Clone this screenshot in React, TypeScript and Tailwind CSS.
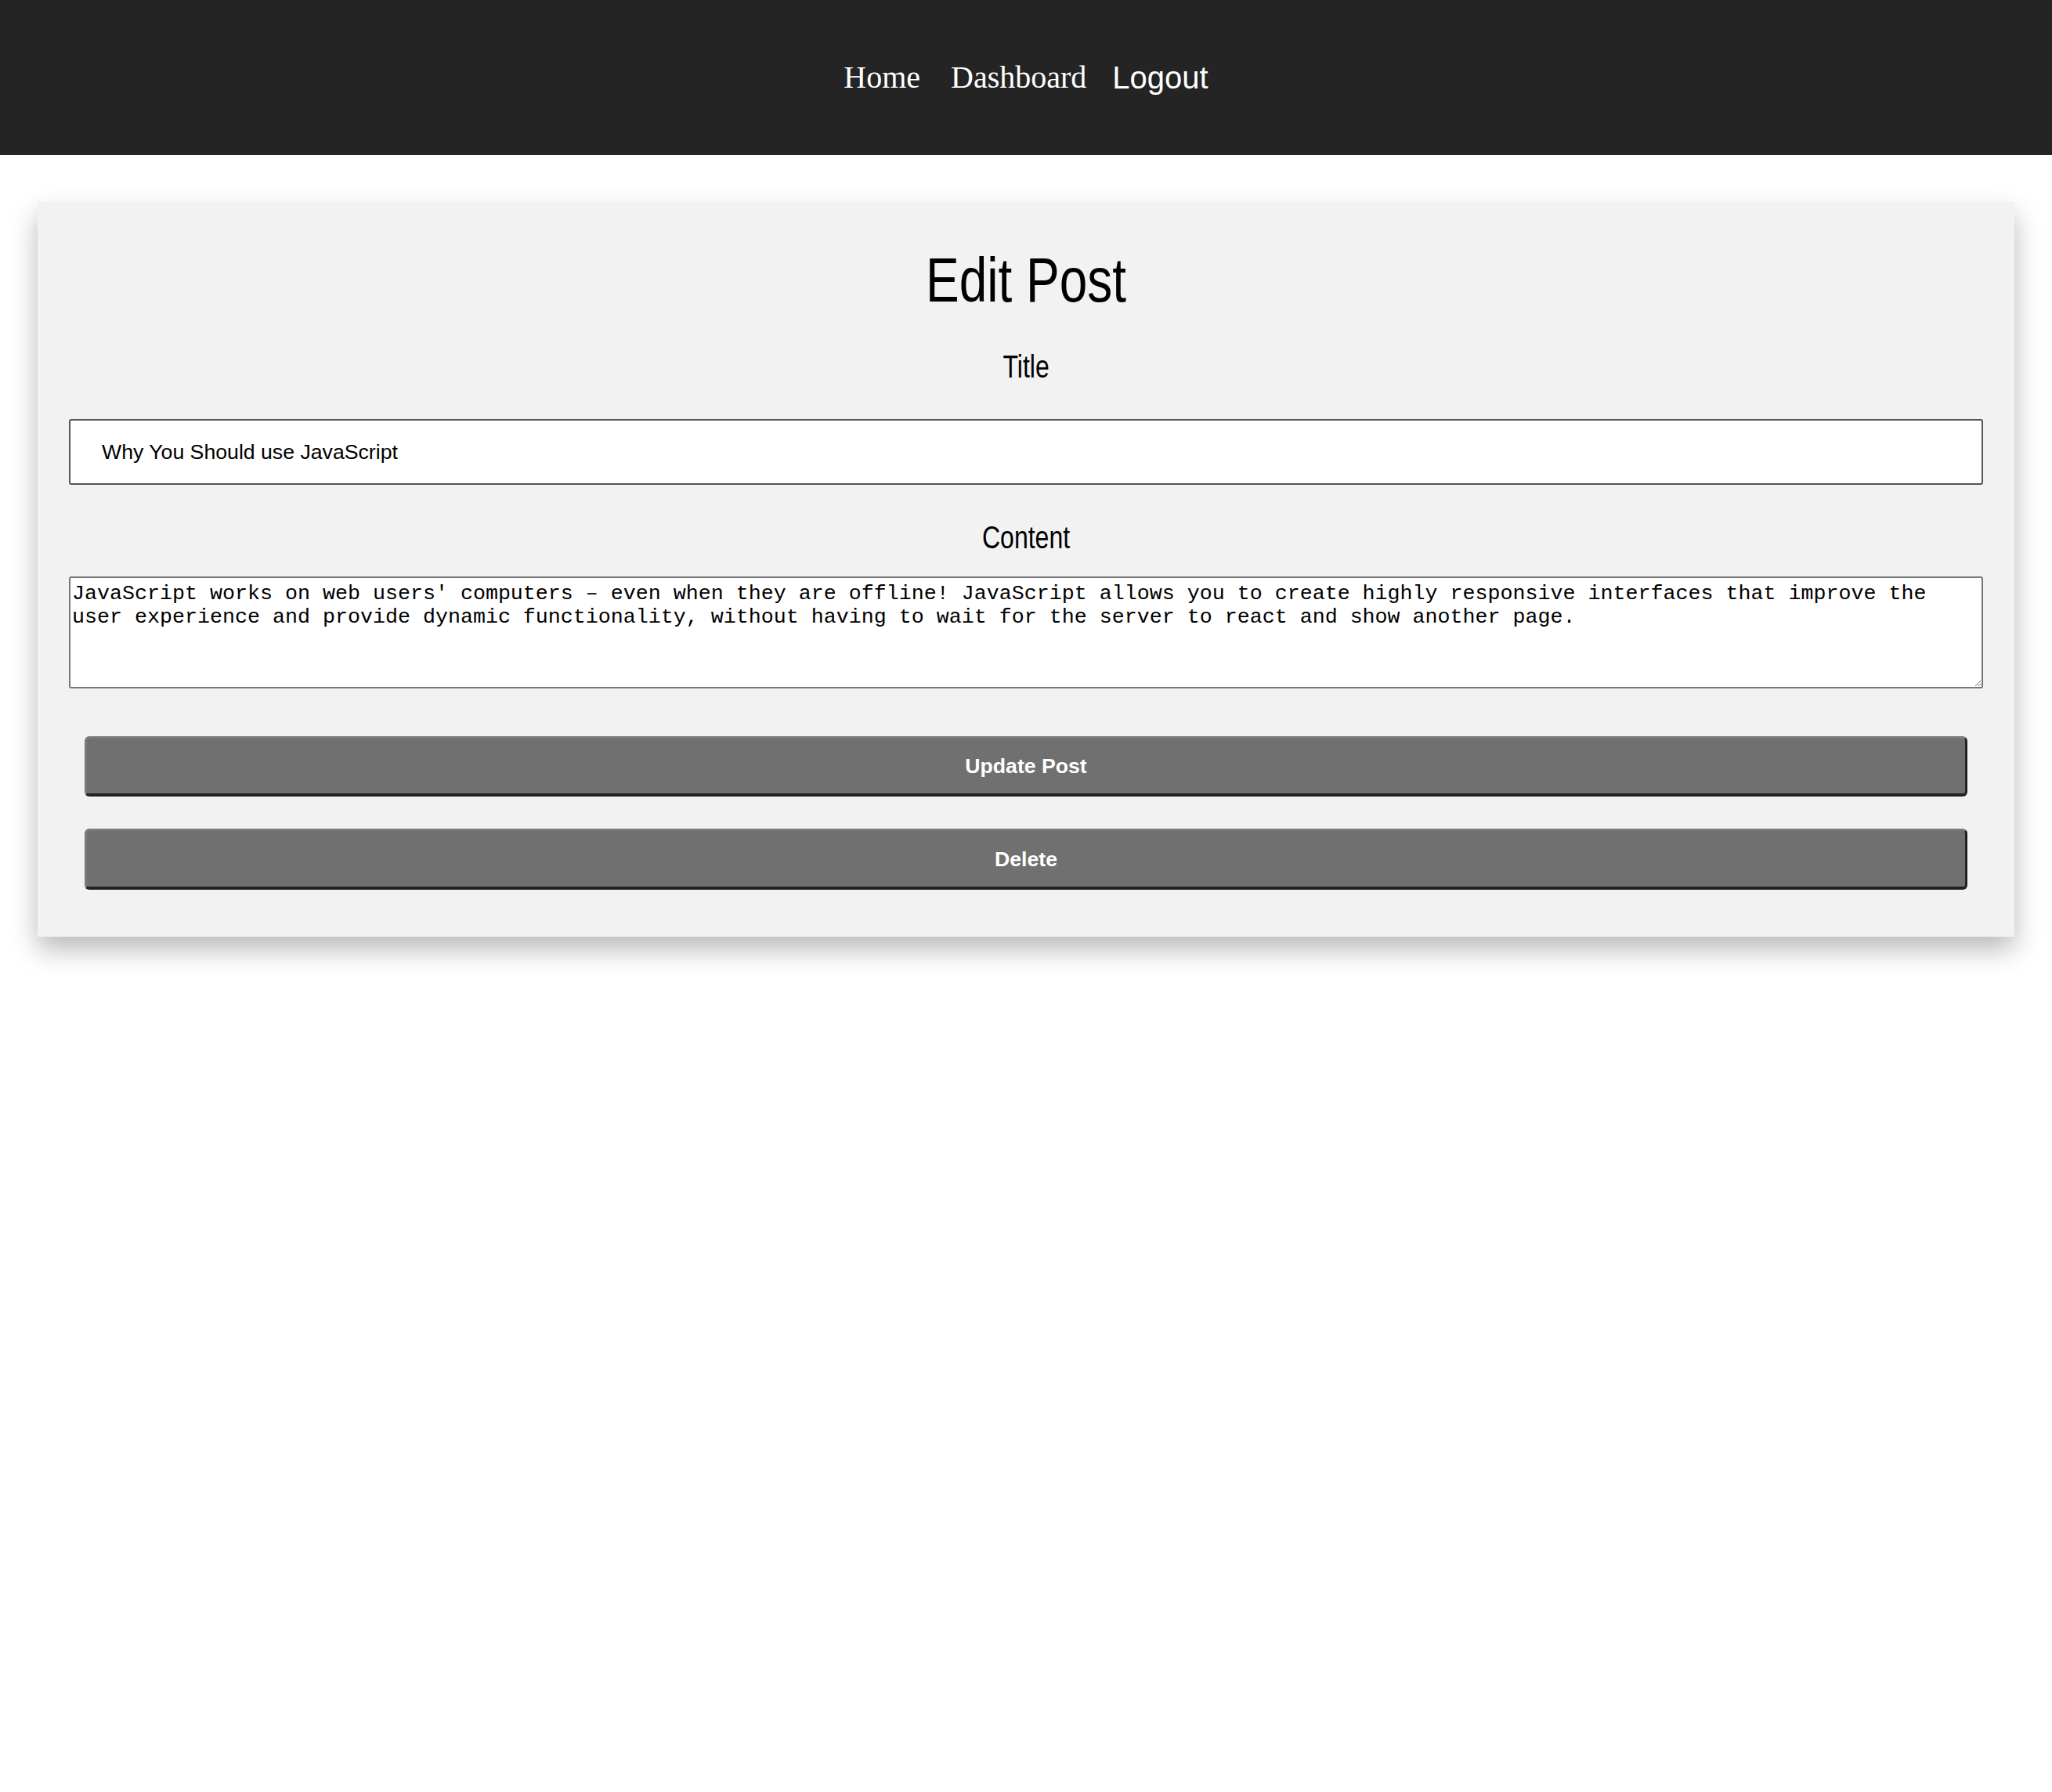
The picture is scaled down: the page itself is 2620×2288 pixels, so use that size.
import { useState } from 'react'

const content =
  "JavaScript works on web users' computers – even when they are offline! JavaScript allows you to create highly responsive interfaces that improve the user experience and provide dynamic functionality, without having to wait for the server to react and show another page."

// no narrow face installed, so the condensed headings are squeezed horizontally
const narrow = "scale-x-[0.8] font-['Liberation_Sans',Arial,sans-serif]"

export default function App() {
  const [title, setTitle] = useState('Why You Should use JavaScript')
  const [body, setBody] = useState(content)

  return (
    <div className="min-h-[2288px] bg-white">
      {/* Top nav */}
      <header className="flex h-[198px] items-center justify-center bg-[#242424] text-white">
        <a className="mr-[39px] font-['Liberation_Serif',serif] text-[40px] leading-none">Home</a>
        <a className="mr-[33px] font-['Liberation_Serif',serif] text-[40px] leading-none">Dashboard</a>
        <button className="font-['Liberation_Sans',Arial,sans-serif] text-[40px] leading-none text-white">
          Logout
        </button>
      </header>

      {/* Edit form card */}
      <main className="mx-12 mt-[60px] bg-[#f2f2f2] px-10 pt-[60px] pb-[60px] shadow-[0_16px_32px_rgba(0,0,0,0.28)]">
        <h1 className="flex justify-center text-[80px] leading-[80px] text-black">
          <span className={narrow}>Edit Post</span>
        </h1>

        <label className="mt-[50px] flex justify-center text-[40px] leading-[40px] text-black">
          <span className={narrow}>Title</span>
        </label>
        <input
          value={title}
          onChange={(e) => setTitle(e.target.value)}
          className="mt-[47px] block h-[84px] w-full rounded-[3px] border-2 border-[#555] bg-white px-[40px] font-['Liberation_Sans',Arial,sans-serif] text-[26.67px] text-black outline-none"
        />

        <label className="mt-[47px] flex justify-center text-[40px] leading-[40px] text-black">
          <span className={narrow}>Content</span>
        </label>
        <textarea
          value={body}
          onChange={(e) => setBody(e.target.value)}
          className="mt-[30px] block h-[143px] w-full rounded-[3px] border-2 border-[#767676] bg-white px-[2px] pt-[5px] pb-[2px] font-['Liberation_Mono','Courier_New',monospace] text-[26.67px] leading-[30px] text-black outline-none"
        />

        <div className="mx-5 mt-[61px] flex flex-col gap-[41px]">
          <button className="h-[77px] w-full rounded-[6px] border-[3px] border-b-4 border-t-[#7a7a7a] border-l-[#7a7a7a] border-r-[#222] border-b-[#222] bg-[#707070] font-['Liberation_Sans',Arial,sans-serif] text-[26.67px] font-bold text-white">
            Update Post
          </button>
          <button className="h-[78px] w-full rounded-[6px] border-[3px] border-b-4 border-t-[#7a7a7a] border-l-[#7a7a7a] border-r-[#222] border-b-[#222] bg-[#707070] font-['Liberation_Sans',Arial,sans-serif] text-[26.67px] font-bold text-white">
            Delete
          </button>
        </div>
      </main>
    </div>
  )
}
